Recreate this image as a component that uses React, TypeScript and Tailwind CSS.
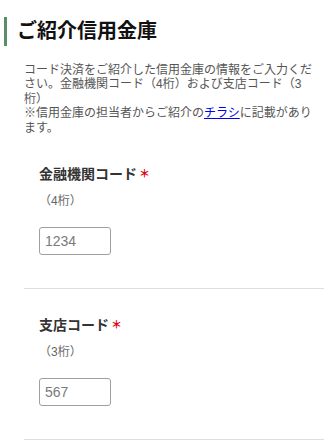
import React from 'react';

const font = { fontFamily: '"Liberation Sans", "Noto Sans CJK JP", sans-serif' };

type FieldProps = {
  label: string;
  hint: string;
  placeholder: string;
};

function CodeField({ label, hint, placeholder }: FieldProps) {
  return (
    <div className="ml-6 mr-3 border-b border-[#dddddd] pl-[15px] pt-[26px] pb-[33px]">
      <div className="flex items-center text-[14px] leading-[20px] font-bold text-[#333333]">
        <span>{label}</span>
        <span className="ml-[2px] text-[11px] leading-[20px] font-bold text-[#e60012]">＊</span>
      </div>
      <p className="mt-[8px] text-[12px] leading-[18px] text-[#666666]">{hint}</p>
      <input
        type="text"
        placeholder={placeholder}
        className="mt-[17px] block h-[28px] w-[72px] rounded-[3px] border border-[#a0a0a0] bg-white px-[5px] text-[14px] text-[#333333] outline-none placeholder:text-[#7a7a7a]"
        style={font}
      />
    </div>
  );
}

export default function App() {
  return (
    <div className="min-h-screen w-[336px] bg-white" style={font}>
      <h2 className="ml-1 mt-[17px] border-l-[3px] border-[#5b8d6b] pl-[10px] text-[20px] leading-[29px] font-bold text-[#111111]">
        ご紹介信用金庫
      </h2>

      <p className="mt-[17px] mb-[3px] ml-6 w-[296px] text-[12px] leading-[1.2] text-[#555555]">
        コード決済をご紹介した信用金庫の情報をご入力ください。金融機関コード（4桁）および支店コード（3桁）
        <br />
        ※信用金庫の担当者からご紹介の
        <a href="#" className="text-[#0000ee] underline">
          チラシ
        </a>
        に記載があります。
      </p>

      <CodeField label="金融機関コード" hint="（4桁）" placeholder="1234" />
      <CodeField label="支店コード" hint="（3桁）" placeholder="567" />
    </div>
  );
}
